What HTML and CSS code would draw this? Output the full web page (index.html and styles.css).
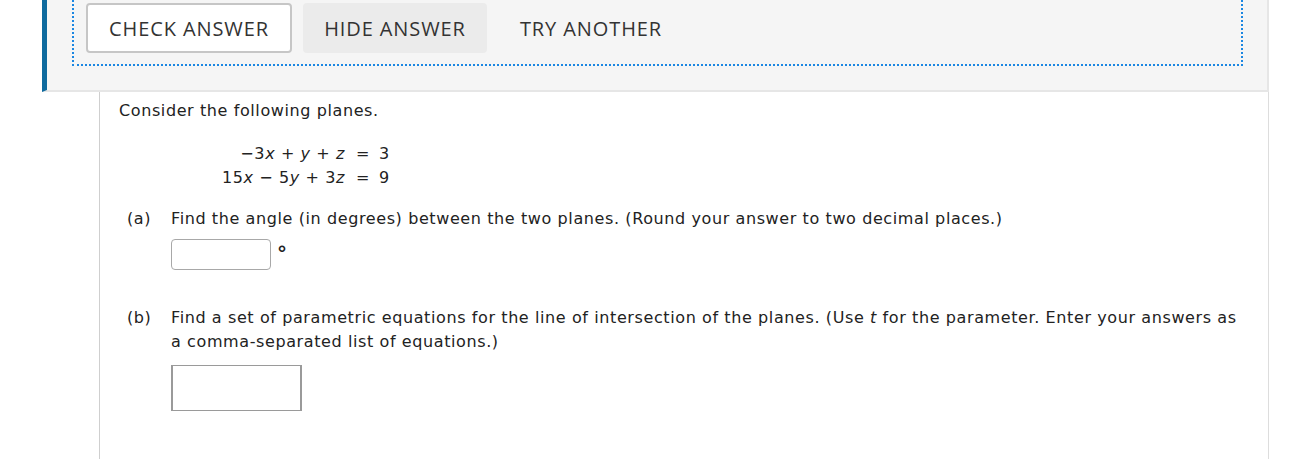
FILE: index.html
```html
<!DOCTYPE html>
<html>
<head>
<meta charset="utf-8">
<link rel="stylesheet" href="styles.css">
</head>
<body>
<div class="page">
  <div class="toolbar">
    <div class="focus-box">
      <button class="btn btn-check">CHECK ANSWER</button>
      <button class="btn btn-hide">HIDE ANSWER</button>
      <button class="btn btn-try">TRY ANOTHER</button>
    </div>
  </div>
  <div class="question">
    <p class="intro">Consider the following planes.</p>
    <table class="system">
      <tr><td class="lhs">&minus;3<i>x</i> + <i>y</i> + <i>z</i></td><td class="eq">=</td><td class="rhs">3</td></tr>
      <tr><td class="lhs">15<i>x</i> &minus; 5<i>y</i> + 3<i>z</i></td><td class="eq">=</td><td class="rhs">9</td></tr>
    </table>
    <div class="part">
      <span class="label">(a)</span>
      <div class="body">
        <p>Find the angle (in degrees) between the two planes. (Round your answer to two decimal places.)</p>
        <div class="answer-row">
          <input class="input-a" type="text">
          <span class="deg">°</span>
        </div>
      </div>
    </div>
    <div class="part part-b">
      <span class="label">(b)</span>
      <div class="body">
        <p>Find a set of parametric equations for the line of intersection of the planes. (Use <i>t</i> for the parameter. Enter your answers as a comma-separated list of equations.)</p>
        <div class="answer-row">
          <input class="input-b" type="text">
        </div>
      </div>
    </div>
  </div>
</div>
</body>
</html>
```

FILE: styles.css
```css
html, body {
  margin: 0;
  padding: 0;
  background: #ffffff;
}
.page {
  margin-left: 42px;
  width: 1227px;
}
.toolbar {
  background: #f5f5f5;
  border-left: 5px solid #0e6a9e;
  border-right: 2px solid #e6e6e6;
  border-bottom: 2px solid #e6e6e6;
  padding: 0 24px 24px 25px;
  height: 66px;
}
.focus-box {
  border: 2px dotted #1b87e2;
  border-top: none;
  padding: 3px 0 0 12px;
  box-sizing: border-box;
  height: 66px;
  display: flex;
  gap: 11px;
  align-items: flex-start;
}
.btn {
  font-family: "Open Sans", "Liberation Sans", sans-serif;
  font-size: 20px;
  letter-spacing: 0.9px;
  color: #333333;
  height: 50px;
  padding: 0;
  border-radius: 4px;
  background: transparent;
  border: 2px solid transparent;
  cursor: pointer;
  white-space: nowrap;
}
.btn-check {
  background: #ffffff;
  border-color: #c6c6c6;
  width: 206px;
}
.btn-hide {
  background: #ebebeb;
  border-color: #ebebeb;
  width: 184px;
}
.btn-try {
  width: 186px;
}
.question {
  margin-left: 57px;
  border-left: 1px solid #cfcfcf;
  border-right: 1px solid #dddddd;
  padding: 7px 24px 48px 19px;
  font-family: "DejaVu Sans", Verdana, sans-serif;
  font-size: 16px;
  letter-spacing: 0.6px;
  color: #222222;
  line-height: 24px;
}
.intro {
  margin: 0 0 19px 0;
}
.system {
  border-collapse: collapse;
  margin-left: 103px;
}
.system td {
  padding: 0;
  line-height: 24px;
}
.system .lhs {
  text-align: right;
  white-space: pre;
}
.system .eq {
  padding: 0 9px 0 11px;
}
.system i, .body i {
  font-style: italic;
}
.part {
  display: flex;
  margin-top: 17px;
  margin-left: 8px;
}
.part-b {
  margin-top: 36px;
}
.label {
  width: 44px;
  flex: none;
}
.body p {
  margin: 0;
}
.answer-row {
  display: flex;
  align-items: flex-start;
  margin-top: 8px;
}
.input-a {
  width: 100px;
  height: 31px;
  box-sizing: border-box;
  border: 1px solid #a8a8a8;
  border-radius: 4px;
  margin: 0;
  padding: 0;
}
.deg {
  margin-left: 6px;
  margin-top: 4px;
  line-height: 20px;
  font-size: 20px;
  font-weight: bold;
  color: #222222;
}
.part-b .answer-row {
  margin-top: 11px;
}
.input-b {
  width: 131px;
  height: 46px;
  box-sizing: border-box;
  border: 1px solid #9a9a9a;
  border-left-width: 2px;
  border-right-width: 2px;
  border-radius: 0;
  margin: 0;
  padding: 0;
}
```
